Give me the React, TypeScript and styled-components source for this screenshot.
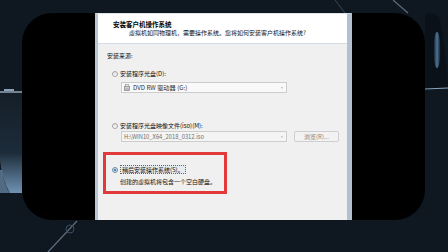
import React from "react";
import styled, { createGlobalStyle } from "styled-components";

const Global = createGlobalStyle`
  html, body { margin: 0; padding: 0; width: 448px; height: 252px; overflow: hidden; background: #0f1820; }
  * { box-sizing: border-box; }
`;

const Stage = styled.div`
  position: relative;
  width: 448px;
  height: 252px;
  padding-top: 13px;
  background: #0f1820;
  overflow: hidden;
  font-family: "Noto Sans CJK SC", "Noto Sans", sans-serif;
`;

const Decor = styled.svg`
  position: absolute;
  left: 0;
  top: 0;
  z-index: 0;
`;

const Panel = styled.div`
  position: relative;
  z-index: 1;
  margin-left: 22px;
  width: 403px;
  height: 207px;
  background: #000;
  border-radius: 30px;
  padding-left: 73px;
`;

const Dialog = styled.div`
  display: flex;
  flex-direction: column;
  width: 257px;
  height: 207px;
  background: #f0f0f0;
  border-top: 1px solid #dde3e8;
  border-left: 3px solid #b8c5d2;
  border-right: 5px solid #b3c1cf;
`;

const Header = styled.div`
  height: 30px;
  background: #fff;
  border-bottom: 1px solid #d4dbe2;
  padding: 6px 0 0 15px;
`;

const Title = styled.div`
  font-size: 6.5px;
  font-weight: 700;
  line-height: 8px;
  color: #000;
  white-space: nowrap;
`;

const Subtitle = styled.div`
  margin-top: 1px;
  padding-left: 16px;
  font-size: 6px;
  line-height: 8px;
  color: #111;
  white-space: nowrap;
`;

const Body = styled.div`
  flex: 1;
  padding: 8px 0 0 5px;
`;

const SectionLabel = styled.div`
  padding-left: 4px;
  font-size: 6px;
  line-height: 8px;
  color: #111;
`;

const OptionRow = styled.div<{ $top: number; $indent?: number }>`
  display: flex;
  align-items: center;
  gap: 2px;
  height: 9px;
  margin-top: ${(p) => p.$top}px;
  margin-left: ${(p) => p.$indent ?? 9}px;
  font-size: 6px;
  color: #111;
  white-space: nowrap;
`;

const Radio = styled.span<{ $checked?: boolean }>`
  position: relative;
  width: 6px;
  height: 6px;
  border-radius: 50%;
  border: 1px solid ${(p) => (p.$checked ? "#6f8da8" : "#a4a4a4")};
  background: ${(p) => (p.$checked ? "#d4e1ec" : "linear-gradient(#e2e2e2, #fbfbfb)")};
  flex: none;
  &::after {
    content: "";
    display: ${(p) => (p.$checked ? "block" : "none")};
    position: absolute;
    left: 1px;
    top: 1px;
    width: 2px;
    height: 2px;
    border-radius: 50%;
    background: #2b5f91;
  }
`;

const Focus = styled.span`
  padding: 0 1px;
  line-height: 7px;
  border: 1px dotted #666;
  background: #e6ebf0;
`;

const FieldRow = styled.div<{ $top: number }>`
  display: flex;
  gap: 7px;
  margin-top: ${(p) => p.$top}px;
  margin-left: 18px;
`;

const Select = styled.div<{ $dim?: boolean }>`
  display: flex;
  align-items: center;
  gap: 3px;
  width: 166px;
  height: 11px;
  padding: 0 3px 0 2px;
  background: ${(p) => (p.$dim ? "#f4f4f4" : "#f9f9f9")};
  border: 1px solid #cdcdcd;
  font-size: ${(p) => (p.$dim ? "5.8px" : "6.2px")};
  color: ${(p) => (p.$dim ? "#6e6e6e" : "#333")};
  white-space: nowrap;
`;

const SelectText = styled.span`
  flex: 1;
  line-height: 9px;
`;

const Caret = styled.span`
  width: 0;
  height: 0;
  border-left: 1.5px solid transparent;
  border-right: 1.5px solid transparent;
  border-top: 2px solid #bbb;
`;

const Button = styled.div`
  display: flex;
  align-items: center;
  justify-content: center;
  width: 45px;
  height: 11px;
  background: #f2f2f2;
  border: 1px solid #cfcfcf;
  border-radius: 2px;
  font-size: 6px;
  color: #858585;
  white-space: nowrap;
`;

const Highlight = styled.div`
  width: 124px;
  height: 42px;
  margin-top: 10px;
  border: 3px solid #e23a3a;
  padding: 10px 0 0 0;
`;

const Description = styled.div`
  margin-top: 4px;
  padding-left: 14px;
  font-size: 6px;
  line-height: 8px;
  color: #111;
  white-space: nowrap;
`;

const DriveIcon = () => (
  <svg width="6" height="7" viewBox="0 0 6 7">
    <rect x="0.5" y="2.5" width="5" height="4" fill="#cfd3d8" stroke="#7b8086" strokeWidth="0.7" />
    <rect x="1.5" y="0.5" width="3" height="2" fill="#e6e8ea" stroke="#8a8f95" strokeWidth="0.6" />
    <line x1="1.2" y1="5" x2="4.8" y2="5" stroke="#6a6f75" strokeWidth="0.5" />
  </svg>
);

export default function App() {
  return (
    <Stage>
      <Global />
      <Decor width="448" height="252" viewBox="0 0 448 252">
        <defs>
          <linearGradient id="glassL" x1="0" y1="0" x2="0" y2="1">
            <stop offset="0" stopColor="#141e28" />
            <stop offset="0.6" stopColor="#1d2c3a" />
            <stop offset="1" stopColor="#6f93b3" />
          </linearGradient>
          <linearGradient id="glassR" x1="0" y1="0" x2="1" y2="0">
            <stop offset="0" stopColor="#0f1820" />
            <stop offset="0.5" stopColor="#4f7598" />
            <stop offset="1" stopColor="#101a24" />
          </linearGradient>
        </defs>
        <line x1="0" y1="92" x2="22" y2="92" stroke="#b9ccdc" strokeWidth="1.2" />
        <rect x="4" y="89" width="10" height="2" fill="#8aa0b4" />
        <path d="M0 93 L22 93 L22 193 L10 193 Q2 180 0 160 Z" fill="url(#glassL)" />
        <path d="M10 193 Q4 185 2 170 L0 170 L0 193 Z" fill="#7ea4c4" opacity="0.6" />
        <line x1="48" y1="252" x2="77" y2="221" stroke="#5d6e80" strokeWidth="1.2" />
        <circle cx="70" cy="229" r="4" fill="none" stroke="#3e4d5c" strokeWidth="1" />
        <line x1="335" y1="0" x2="345" y2="13" stroke="#3b4856" strokeWidth="1" />
        <line x1="393" y1="0" x2="408" y2="13" stroke="#5c6c7c" strokeWidth="1.2" />
        <path d="M425 14 Q436 10 440 20 Q446 50 448 88 L425 90 Z" fill="#0a1119" />
        <ellipse cx="437" cy="50" rx="3.5" ry="18" fill="url(#glassR)" />
        <line x1="425" y1="89" x2="448" y2="88" stroke="#8aa6c0" strokeWidth="1" />
      </Decor>
      <Panel>
        <Dialog>
          <Header>
            <Title>安装客户机操作系统</Title>
            <Subtitle>虚拟机如同物理机，需要操作系统。您将如何安装客户机操作系统?</Subtitle>
          </Header>
          <Body>
            <SectionLabel>安装来源:</SectionLabel>
            <OptionRow $top={9}>
              <Radio />
              <span>安装程序光盘(D):</span>
            </OptionRow>
            <FieldRow $top={4}>
              <Select>
                <DriveIcon />
                <SelectText>DVD RW 驱动器 (G:)</SelectText>
                <Caret />
              </Select>
            </FieldRow>
            <OptionRow $top={28}>
              <Radio />
              <span>安装程序光盘映像文件(iso)(M):</span>
            </OptionRow>
            <FieldRow $top={1}>
              <Select $dim>
                <SelectText>H:\WIN10_X64_2018_0312.iso</SelectText>
                <Caret />
              </Select>
              <Button>浏览(R)...</Button>
            </FieldRow>
            <Highlight>
              <OptionRow $top={0} $indent={6}>
                <Radio $checked />
                <Focus>稍后安装操作系统(S)。</Focus>
              </OptionRow>
              <Description>创建的虚拟机将包含一个空白硬盘。</Description>
            </Highlight>
          </Body>
        </Dialog>
      </Panel>
    </Stage>
  );
}
